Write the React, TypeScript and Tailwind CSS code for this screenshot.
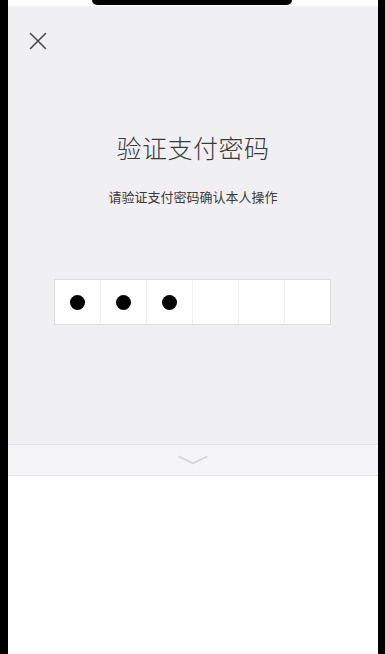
const font = { fontFamily: '"Noto Sans CJK SC", "Noto Sans", sans-serif' };

export default function App() {
  const filled = 3;
  const cells = [0, 1, 2, 3, 4, 5];

  return (
    <div className="flex h-[654px] w-[385px] bg-black" style={font}>
      <div className="w-[8px] shrink-0 bg-black" />
      <main className="flex flex-1 flex-col overflow-hidden bg-white">
        {/* status strip with notch */}
        <div className="flex h-[6px] shrink-0 justify-center bg-white pr-[3px]">
          <div className="h-[5px] w-[200px] rounded-b-[12px] bg-black" />
        </div>

        {/* dialog area */}
        <section className="flex h-[438px] flex-col bg-[#f0eff2]">
          <button type="button" aria-label="关闭" className="ml-[19px] mt-[24px] flex h-[22px] w-[22px] items-center justify-center">
            <svg viewBox="0 0 20 20" className="h-[20px] w-[20px]" fill="none" stroke="#4a4a4a" strokeWidth="1.6" strokeLinecap="round">
              <path d="M2.5 2.5 17.5 17.5M17.5 2.5 2.5 17.5" />
            </svg>
          </button>

          <h1 className="mt-[79px] text-center text-[25px] font-light leading-[32px] tracking-[0.5px] text-[#3a3a3a]">
            验证支付密码
          </h1>
          <p className="mt-[24px] text-center text-[13px] leading-[20px] text-[#3a3a3a]">
            请验证支付密码确认本人操作
          </p>

          <div className="ml-[46px] mt-[72px] flex h-[46px] w-[277px] border border-[#dcdcdc] bg-white">
            {cells.map((i) => (
              <div
                key={i}
                className={`flex flex-1 items-center justify-center ${i < 5 ? "border-r border-[#f0f0f0]" : ""}`}
              >
                {i < filled ? <span className="h-[15px] w-[15px] rounded-full bg-black" /> : null}
              </div>
            ))}
          </div>
        </section>

        {/* keyboard handle */}
        <div className="flex h-[32px] shrink-0 items-center justify-center border-y border-[#e2e1e5] bg-[#f5f4f7]">
          <svg viewBox="0 0 30 10" className="h-[10px] w-[30px]" fill="none" stroke="#d4d3d7" strokeWidth="1.4" strokeLinecap="round" strokeLinejoin="round">
            <path d="M1 1.5 15 8.5 29 1.5" />
          </svg>
        </div>

        <div className="flex-1 bg-white" />
      </main>
      <div className="w-[7px] shrink-0 bg-black" />
    </div>
  );
}
